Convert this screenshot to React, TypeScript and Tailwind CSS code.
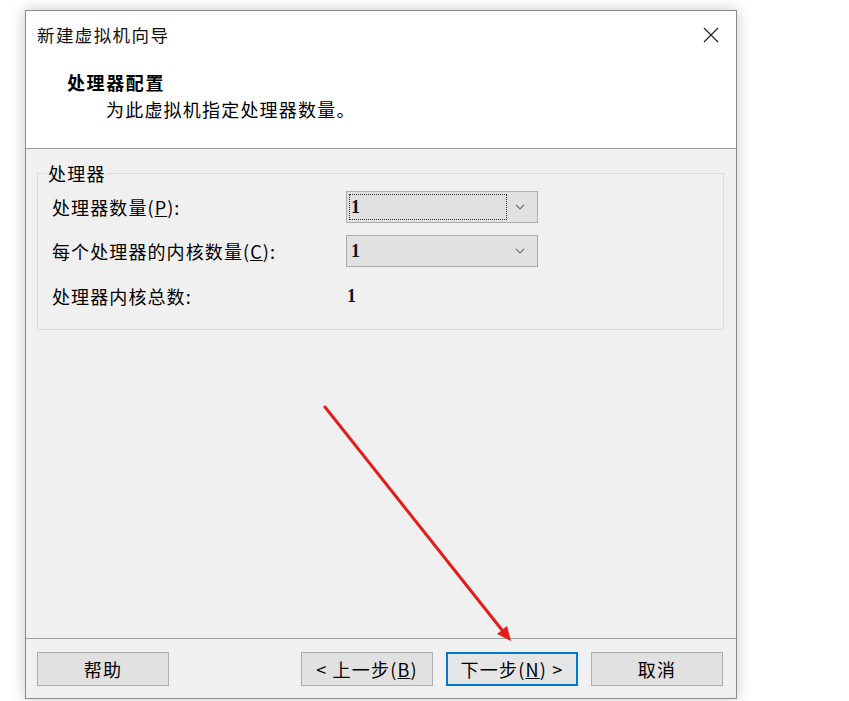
import React from "react";

const ui = { fontFamily: '"Noto Sans CJK SC", "Noto Sans", sans-serif' };
const digit = { fontFamily: '"Liberation Serif", "Noto Sans CJK SC", serif' };

function Combo({ focused }: { focused?: boolean }) {
  return (
    <div className="w-[192px] h-[32px] bg-[#e1e1e1] border border-[#adadad] flex items-center pl-[2px] pr-[6px]">
      <div
        className={
          "flex-1 h-[26px] flex items-center pl-[1px] " +
          (focused ? "border border-dotted border-[#333]" : "border border-transparent")
        }
      >
        <span className="text-[18px] leading-none font-bold text-[#111]" style={digit}>
          1
        </span>
      </div>
      <svg width="22" height="10" viewBox="0 0 22 10" className="ml-[2px]">
        <path d="M7 3 L11 7 L15 3" fill="none" stroke="#707070" strokeWidth="1.1" />
      </svg>
    </div>
  );
}

function Btn({ children, primary }: { children: React.ReactNode; primary?: boolean }) {
  return (
    <div
      className={
        "w-[132px] h-[34px] flex items-center justify-center text-[18px] leading-none tracking-[1.2px] text-black " +
        (primary ? "bg-[#e5e5e5] border-2 border-[#0078d7]" : "bg-[#e1e1e1] border border-[#adadad]")
      }
    >
      {children}
    </div>
  );
}

export default function App() {
  return (
    <div className="relative w-[849px] h-[701px] bg-white overflow-hidden" style={ui}>
      <div className="pl-[25px] pt-[10px]">
        <div className="w-[712px] h-[689px] border border-[#8a8a8a] bg-[#f0f0f0] flex flex-col shadow-[0_0_14px_rgba(0,0,0,0.22)]">
          {/* header */}
          <div className="h-[138px] bg-white border-b border-[#a0a0a0] flex flex-col">
            <div className="h-[48px] flex items-center justify-between pl-[11px] pr-[16px]">
              <span className="text-[17.5px] leading-none tracking-[1.4px] text-[#111]">新建虚拟机向导</span>
              <svg width="18" height="18" viewBox="0 0 18 18">
                <path d="M2 2 L16 16 M16 2 L2 16" stroke="#222" strokeWidth="1.2" />
              </svg>
            </div>
            <div className="pl-[41px] pt-[11px]">
              <div className="text-[18px] leading-[24px] tracking-[1.6px] font-bold text-black">处理器配置</div>
              <div className="ml-[39px] mt-[3px] text-[18px] leading-[24px] tracking-[1.2px] text-black">
                为此虚拟机指定处理器数量。
              </div>
            </div>
          </div>

          {/* body */}
          <div className="flex-1 px-[11px] pt-[12px]">
            <fieldset className="border border-[#dcdcdc] pl-[14px] pr-[12px] pb-[16px] mr-[1px]">
              <legend className="-ml-[5px] px-[1px] text-[18px] leading-[24px] tracking-[1.2px] text-black">处理器</legend>
              <div className="flex flex-col gap-[12px] pt-[6px] text-[18px] leading-none tracking-[1.1px] text-black">
                <div className="flex items-center h-[32px]">
                  <span className="w-[294px]">
                    处理器数量(<span className="underline">P</span>):
                  </span>
                  <Combo focused />
                </div>
                <div className="flex items-center h-[32px]">
                  <span className="w-[294px]">
                    每个处理器的内核数量(<span className="underline">C</span>):
                  </span>
                  <Combo />
                </div>
                <div className="flex items-center h-[34px]">
                  <span className="w-[295px]">处理器内核总数:</span>
                  <span className="font-bold text-[#111]" style={digit}>
                    1
                  </span>
                </div>
              </div>
            </fieldset>
          </div>

          {/* footer */}
          <div className="h-[60px] border-t border-[#a0a0a0] flex items-start pt-[13px] pl-[11px] pr-[13px]">
            <Btn>帮助</Btn>
            <div className="flex-1" />
            <div className="flex gap-[13px]">
              <Btn>
                &lt; 上一步(<span className="underline">B</span>)
              </Btn>
              <Btn primary>
                下一步(<span className="underline">N</span>) &gt;
              </Btn>
              <Btn>取消</Btn>
            </div>
          </div>
        </div>
      </div>

      {/* annotation arrow */}
      <svg className="absolute inset-0 pointer-events-none" width="849" height="701" viewBox="0 0 849 701">
        <line x1="325" y1="407" x2="502" y2="630" stroke="#e41c1c" strokeWidth="3" strokeLinecap="round" />
        <polygon points="511,641 507,626 497,634" fill="#e41c1c" />
      </svg>
    </div>
  );
}
